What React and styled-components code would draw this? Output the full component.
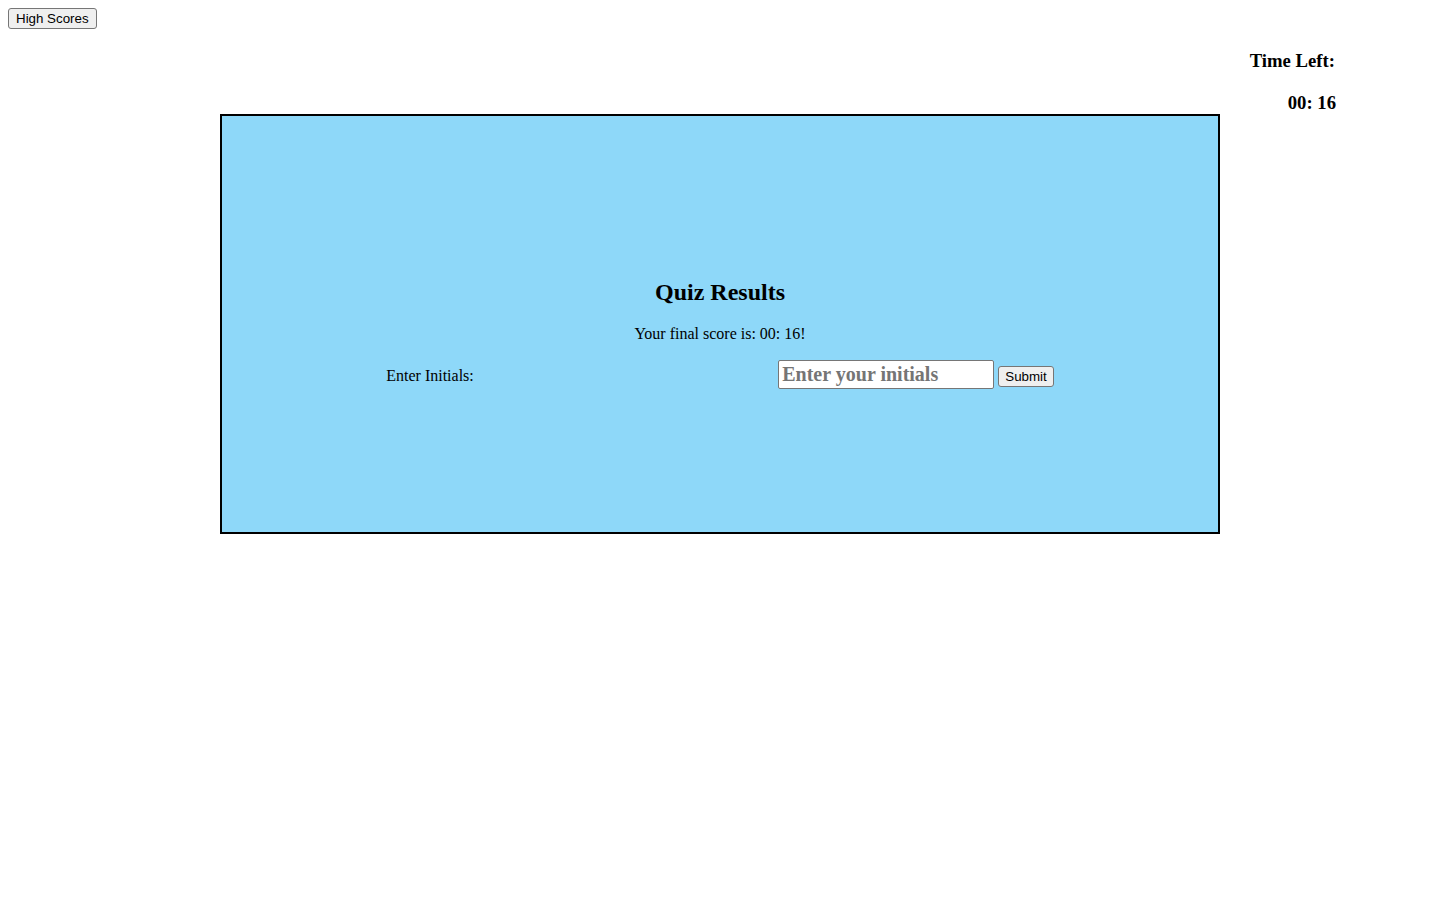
import React from 'react'
import styled, { createGlobalStyle } from 'styled-components'

const GlobalStyle = createGlobalStyle`
  body {
    margin: 8px;
    background: #fff;
    color: #000;
    font-family: "Liberation Serif", "Times New Roman", serif;
    font-size: 16px;
  }
`

const Button = styled.button`
  box-sizing: border-box;
  height: 21px;
  padding: 1px ${p => p.$pad || 6}px;
  font-family: "Liberation Sans", Arial, sans-serif;
  font-size: 13.33px;
  color: #000;
  background: #efefef;
  border: 1px solid #767676;
  border-radius: 3px;
  cursor: pointer;
`

const Header = styled.header`
  display: flex;
`

const Timer = styled.div`
  display: flex;
  flex-direction: column;
  align-items: flex-end;
  padding-top: 1px;
  padding-right: 96px;
`

const TimerText = styled.h3`
  margin: 20px 0 0;
  font-size: 18.72px;
  line-height: 22px;
  font-weight: bold;
  padding-right: ${p => p.$shift || 0}px;
`

const Card = styled.main`
  box-sizing: border-box;
  width: 1000px;
  height: 420px;
  margin: 0 auto;
  padding-top: 162px;
  background: #8ed8f9;
  border: 2px solid #000;
  text-align: center;
`

const Title = styled.h2`
  margin: 0;
  font-size: 24px;
  line-height: 28px;
  font-weight: bold;
`

const Score = styled.p`
  margin: 19px 0 0;
  line-height: 18px;
`

const Form = styled.form`
  display: flex;
  justify-content: space-around;
  align-items: baseline;
  margin: 17px 12px 0;
`

const Label = styled.label`
  font-size: 16px;
`

const InputGroup = styled.div`
  display: flex;
  align-items: baseline;
  gap: 4px;
`

const Input = styled.input`
  box-sizing: border-box;
  width: 216px;
  height: 29px;
  padding: 1px 3px;
  font-family: "Liberation Serif", "Times New Roman", serif;
  font-size: 20px;
  font-weight: bold;
  border: 1px solid #767676;
  border-radius: 2px;
  background: #fff;
  &::placeholder {
    color: #757575;
  }
`

export default function App() {
  return (
    <>
      <GlobalStyle />
      <Header>
        <Button $pad={7}>High Scores</Button>
      </Header>
      <Timer>
        <TimerText $shift={1}>Time Left:</TimerText>
        <TimerText>00: 16</TimerText>
      </Timer>
      <Card>
        <Title>Quiz Results</Title>
        <Score>Your final score is: 00: 16!</Score>
        <Form onSubmit={e => e.preventDefault()}>
          <Label htmlFor="initials">Enter Initials:</Label>
          <InputGroup>
            <Input id="initials" placeholder="Enter your initials" />
            <Button type="submit">Submit</Button>
          </InputGroup>
        </Form>
      </Card>
    </>
  )
}
